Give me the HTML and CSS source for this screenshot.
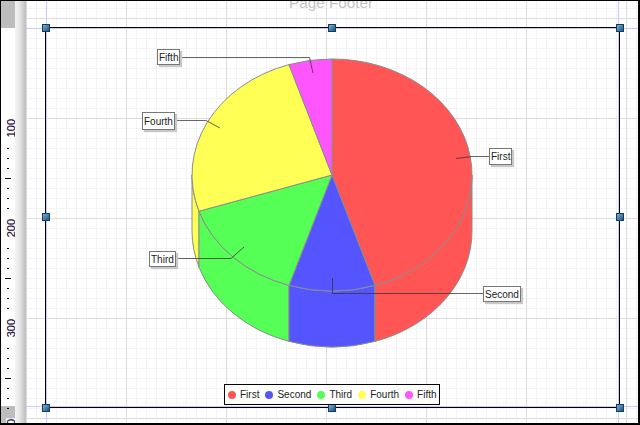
FILE: index.html
```html
<!DOCTYPE html>
<html lang="en">
<head>
<meta charset="utf-8">
<title>Report designer - Pie chart</title>
<link rel="stylesheet" href="styles.css">
</head>
<body>
<div class="window">
  <div class="ruler">
    <div class="ruler-cap ruler-cap-top"></div>
    <div class="ruler-cap ruler-cap-bottom"></div>
    <div class="ruler-label"><span>100</span></div>
    <div class="tick"></div><div class="tick"></div><div class="tick"></div><div class="tick tick-long"></div><div class="tick"></div><div class="tick"></div><div class="tick"></div>
    <div class="ruler-label"><span>200</span></div>
    <div class="tick"></div><div class="tick"></div><div class="tick"></div><div class="tick tick-long"></div><div class="tick"></div><div class="tick"></div><div class="tick"></div>
    <div class="ruler-label"><span>300</span></div>
    <div class="tick"></div><div class="tick"></div><div class="tick"></div><div class="tick tick-long"></div><div class="tick"></div><div class="tick"></div><div class="tick"></div>
    <div class="ruler-label"><span>400</span></div>
  </div>
  <div class="gutter"></div>
  <div class="canvas">
    <div class="band-title">Page Footer</div>
    <div class="guide guide-left"></div>
    <div class="guide guide-right"></div>
    <div class="guide guide-top"></div>
    <div class="guide guide-bottom"></div>

    <svg class="chart" viewBox="26 1 612 422" width="612" height="422" aria-label="Pie chart">
      <g class="edge">
        <path fill="#ffff55" d="M192,175 V231 A140,116 0 0 0 199,267.2 V211.2 A140,116 0 0 1 192,175 Z"/>
        <path fill="#55ff55" d="M199,211.2 V267.2 A140,116 0 0 0 289,341.4 V285.4 A140,116 0 0 1 199,211.2 Z"/>
        <path fill="#5555ff" d="M289,285.4 V341.4 A140,116 0 0 0 375,341.4 V285.4 A140,116 0 0 1 289,285.4 Z"/>
        <path fill="#ff5555" d="M375,285.4 V341.4 A140,116 0 0 0 472,231 V175 A140,116 0 0 1 375,285.4 Z"/>
        <path fill="#ff5555" d="M332,175 L332,59 A140,116 0 0 1 375,285.4 Z"/>
        <path fill="#5555ff" d="M332,175 L375,285.4 A140,116 0 0 1 289,285.4 Z"/>
        <path fill="#55ff55" d="M332,175 L289,285.4 A140,116 0 0 1 199,211.2 Z"/>
        <path fill="#ffff55" d="M332,175 L199,211.2 A140,116 0 0 1 289,64.6 Z"/>
        <path fill="#ff55ff" d="M332,175 L289,64.6 A140,116 0 0 1 332,59 Z"/>
      </g>
      <g class="leader">
        <path d="M489,156.5 H472 L456,158.5"/>
        <path d="M483,293.5 H332.5 V278"/>
        <path d="M177,258.5 H231 L244,247"/>
        <path d="M175,120.5 H206 L220,128"/>
        <path d="M181,57.5 H309.5 L313,73"/>
      </g>
    </svg>

    <div class="callout callout-first">First</div>
    <div class="callout callout-second">Second</div>
    <div class="callout callout-third">Third</div>
    <div class="callout callout-fourth">Fourth</div>
    <div class="callout callout-fifth">Fifth</div>

    <div class="frame">
      <span class="handle h-tl"></span><span class="handle h-tm"></span><span class="handle h-tr"></span>
      <span class="handle h-ml"></span><span class="handle h-mr"></span>
      <span class="handle h-bl"></span><span class="handle h-bm"></span><span class="handle h-br"></span>
    </div>

    <ul class="legend">
      <li class="legend-item"><i class="dot dot-first"></i>First</li>
      <li class="legend-item"><i class="dot dot-second"></i>Second</li>
      <li class="legend-item"><i class="dot dot-third"></i>Third</li>
      <li class="legend-item"><i class="dot dot-fourth"></i>Fourth</li>
      <li class="legend-item"><i class="dot dot-fifth"></i>Fifth</li>
    </ul>
  </div>
</div>
</body>
</html>
```
FILE: styles.css
```css
* { box-sizing: border-box; }
html, body { margin: 0; padding: 0; }
body { width: 640px; height: 425px; overflow: hidden; background: #fff; font-family: "Liberation Sans", Arial, sans-serif; }

.window {
  display: flex;
  width: 640px;
  height: 425px;
  border-style: solid;
  border-color: #000;
  border-width: 1px 2px 2px 1px;
  overflow: hidden;
}

.ruler {
  position: relative;
  flex: 0 0 14px;
  padding-top: 112px;
  background: #fff;
  overflow: hidden;
}
.ruler-cap { position: absolute; left: 0; right: 0; background: #bdbdbd; }
.ruler-cap-top { top: 0; height: 27px; }
.ruler-cap-bottom { top: 405px; height: 20px; }
.ruler-label {
  position: relative;
  display: flex;
  align-items: center;
  justify-content: center;
  height: 30px;
}
.ruler-label span {
  display: block;
  padding: 1px 0;
  background: #fff;
  writing-mode: vertical-rl;
  transform: rotate(180deg);
  font-size: 11px;
  line-height: 10px;
  color: #14143c;
  text-shadow: .4px 0 rgba(230, 70, 0, .3), -.4px 0 rgba(0, 0, 220, .3);
  margin-left: 5px;
}
.tick { position: relative; display: flex; align-items: center; justify-content: center; height: 10px; }
.tick::before { content: ""; display: block; width: 2px; height: 1px; background: #000; }
.tick-long::before { width: 6px; height: 1px; }

.gutter { flex: 0 0 11px; background: linear-gradient(90deg, #f4f4f4, #e6e6e6 40%, #bcbcbc); }

.canvas {
  position: relative;
  flex: 1;
  overflow: hidden;
  background-color: #fff;
  background-image:
    linear-gradient(90deg, #dcdcdc 1px, transparent 1px),
    linear-gradient(#dcdcdc 1px, transparent 1px),
    linear-gradient(90deg, #f4f4f4 1px, transparent 1px),
    linear-gradient(#f4f4f4 1px, transparent 1px);
  background-size: 100px 100px, 100px 100px, 10px 10px, 10px 10px;
  background-position: 0 17px, 0 17px, 0 7px, 0 7px;
}

.band-title {
  position: absolute;
  left: 263px;
  top: -7px;
  font-size: 15.3px;
  line-height: 17px;
  color: #c4c4c4;
  white-space: nowrap;
}

.guide { position: absolute; background: #c9c9ff; }
.guide-left { left: 20px; top: 0; bottom: 0; width: 1px; }
.guide-right { left: 592px; top: 0; bottom: 0; width: 1px; }
.guide-top { left: 0; right: 0; top: 27px; height: 1px; }
.guide-bottom { left: 0; right: 0; top: 405px; height: 1px; }

.chart { position: absolute; left: 0; top: 0; display: block; }
.edge path { stroke: #8c8c8c; stroke-width: 1; }
.leader path { fill: none; stroke: #333; stroke-opacity: .75; stroke-width: 1; }

.callout {
  position: absolute;
  height: 16px;
  padding: 0 1px;
  border: 1px solid #777;
  background: #fff;
  box-shadow: 2px 2px 1px #c8c8c8;
  font-size: 10px;
  line-height: 15px;
  color: #222;
  white-space: nowrap;
}
.callout-first { left: 463px; top: 147px; height: 17px; line-height: 16px; }
.callout-second { left: 457px; top: 285px; }
.callout-third { left: 123px; top: 250px; }
.callout-fourth { left: 116px; top: 111px; height: 18px; line-height: 17px; }
.callout-fifth { left: 131px; top: 48px; }

.frame {
  position: absolute;
  left: 19px;
  top: 26px;
  width: 575px;
  height: 381px;
  border: 1px solid #000;
}
.handle {
  position: absolute;
  width: 8px;
  height: 8px;
  border: 1px solid #123c63;
  background: linear-gradient(135deg, #7fadcc, #1f5486);
}
.h-tl { left: -4px; top: -4px; }
.h-tm { left: 282px; top: -4px; }
.h-tr { right: -5px; top: -4px; }
.h-ml { left: -4px; top: 185px; }
.h-mr { right: -5px; top: 185px; }
.h-bl { left: -4px; bottom: -5px; }
.h-bm { left: 282px; bottom: -5px; }
.h-br { right: -5px; bottom: -5px; }

.legend {
  position: absolute;
  left: 198px;
  top: 383px;
  display: flex;
  align-items: center;
  gap: 6px;
  height: 21px;
  width: 216px;
  margin: 0;
  padding: 0 0 0 3px;
  list-style: none;
  border: 1px solid #000;
  background: #fff;
  font-size: 10px;
  color: #222;
}
.legend-item { display: flex; align-items: center; gap: 4px; white-space: nowrap; }
.dot { display: block; width: 8px; height: 8px; border-radius: 50%; }
.dot-first { background: #ff5555; }
.dot-second { background: #5555ff; }
.dot-third { background: #55ff55; }
.dot-fourth { background: #ffff55; }
.dot-fifth { background: #ff55ff; }
```
